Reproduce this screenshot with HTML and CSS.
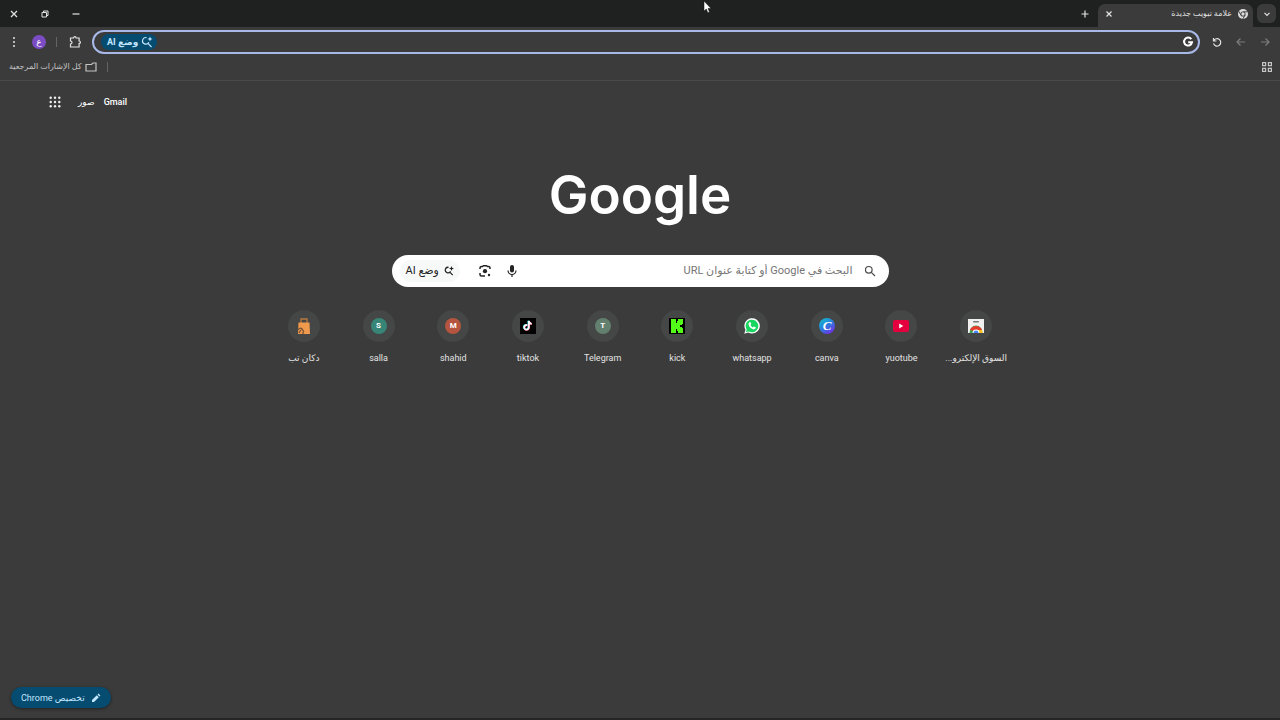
FILE: index.html
```html
<!DOCTYPE html>
<html lang="ar" dir="rtl">
<head>
    <meta charset="UTF-8">
    <meta name="viewport" content="width=device-width, initial-scale=1.0">
    <title>علامة تبويب جديدة</title>
    <link rel="stylesheet" href="styles.css">
</head>
<body>
<div class="tab-strip">
    <button class="tab-search" aria-label="بحث في علامات التبويب">
        <svg width="10" height="10" viewBox="0 0 10 10"><path class="line" d="M2.5 3.8 5 6.3 7.5 3.8"/></svg>
    </button>
    <div class="tab">
        <svg width="10" height="10" viewBox="0 0 20 20">
            <circle cx="10" cy="10" r="10" fill="#dcdcdc"/>
            <path d="M10 5.5h9M6 12.3 1.6 4.6M14 12.3 9.6 20" stroke="#3b3b3b" stroke-width="1.8"/>
            <circle cx="10" cy="10" r="5.2" fill="#3b3b3b"/>
            <circle cx="10" cy="10" r="3.4" fill="#dcdcdc"/>
        </svg>
        <span class="tab-title">علامة تبويب جديدة</span>
        <button class="icon-button tab-close" aria-label="إغلاق علامة التبويب">
            <svg width="8" height="8" viewBox="0 0 8 8"><path class="line" d="M1.5 1.5l5 5M6.5 1.5l-5 5"/></svg>
        </button>
    </div>
    <button class="icon-button new-tab" aria-label="علامة تبويب جديدة">
        <svg width="10" height="10" viewBox="0 0 10 10"><path class="line" d="M5 1.5v7M1.5 5h7"/></svg>
    </button>
    <div class="window-controls">
        <button class="icon-button" aria-label="تصغير">
            <svg width="10" height="10" viewBox="0 0 10 10"><path class="line" d="M1.5 5h7"/></svg>
        </button>
        <button class="icon-button" aria-label="استعادة">
            <svg width="10" height="10" viewBox="0 0 10 10"><path class="thin" d="M2 3.5h4.5V8H2zM3.5 3.3V2H8v4.5H6.8"/></svg>
        </button>
        <button class="icon-button" aria-label="إغلاق">
            <svg width="10" height="10" viewBox="0 0 10 10"><path class="line" d="M2 2l6 6M8 2 2 8"/></svg>
        </button>
    </div>
</div>

<div class="toolbar">
    <div class="nav-buttons">
        <button class="icon-button dim" aria-label="رجوع">
            <svg width="12" height="12" viewBox="0 0 12 12"><path class="line" d="M2 6h8M6.5 2.5 10 6l-3.5 3.5"/></svg>
        </button>
        <button class="icon-button dim" aria-label="تقدم">
            <svg width="12" height="12" viewBox="0 0 12 12"><path class="line" d="M10 6H2M5.5 2.5 2 6l3.5 3.5"/></svg>
        </button>
        <button class="icon-button" aria-label="إعادة تحميل">
            <svg width="12" height="12" viewBox="0 0 12 12"><path class="line" d="M2.5 2v3h3M2.7 4.8A3.7 3.7 0 1 1 2.5 7.4"/></svg>
        </button>
    </div>
    <div class="omnibox">
        <svg width="12" height="12" viewBox="0 0 12 12"><path d="M9.3 3.2A4 4 0 1 0 10 6.3H6.2" fill="none" stroke="#fff" stroke-width="2"/></svg>
        <input class="omnibox-input" type="text" aria-label="شريط العناوين">
        <button class="ai-chip">
            <svg width="12" height="12" viewBox="0 0 12 12"><path class="line" d="M5.5 1.6A3.3 3.3 0 1 0 7.8 6.3M7 7.3 10.5 11"/><path fill="currentColor" d="M9 .5l.7 1.8 1.8.7-1.8.7L9 5.5l-.7-1.8L6.5 3l1.8-.7z"/></svg>
            <span>وضع AI</span>
        </button>
    </div>
    <div class="toolbar-actions">
        <button class="icon-button" aria-label="الإضافات">
            <svg width="14" height="14" viewBox="0 0 14 14"><path class="line" d="M2.5 3h3a1.3 1.3 0 0 1 2.6 0h3v3a1.3 1.3 0 0 1 0 2.6V12H2.5V9a1.5 1.5 0 0 0 0-3z"/></svg>
        </button>
        <span class="divider"></span>
        <button class="avatar">ع</button>
        <button class="icon-button" aria-label="القائمة">
            <svg width="12" height="12" viewBox="0 0 12 12" fill="currentColor"><circle cx="6" cy="2" r="1"/><circle cx="6" cy="6" r="1"/><circle cx="6" cy="10" r="1"/></svg>
        </button>
    </div>
</div>

<div class="bookmarks">
    <button class="icon-button" aria-label="مجموعات علامات التبويب">
        <svg width="10" height="10" viewBox="0 0 10 10"><path class="line" d="M.6.6h3v3h-3zM6.4.6h3v3h-3zM.6 6.4h3v3h-3zM6.4 6.4h3v3h-3z"/></svg>
    </button>
    <span class="divider bookmarks-divider"></span>
    <button class="all-bookmarks">
        <svg width="12" height="10" viewBox="0 0 12 10"><path class="line" d="M1 2.5h5.5L8 1h3v8H1z"/></svg>
        <span>كل الإشارات المرجعية</span>
    </button>
</div>

<main class="page">
    <nav class="page-links">
        <a href="#">Gmail</a>
        <a href="#" class="images-link">صور</a>
        <button class="icon-button" aria-label="تطبيقات Google">
            <svg width="12" height="12" viewBox="0 0 12 12" fill="#f1f1f1"><circle cx="1.7" cy="1.7" r="1.2"/><circle cx="6" cy="1.7" r="1.2"/><circle cx="10.3" cy="1.7" r="1.2"/><circle cx="1.7" cy="6" r="1.2"/><circle cx="6" cy="6" r="1.2"/><circle cx="10.3" cy="6" r="1.2"/><circle cx="1.7" cy="10.3" r="1.2"/><circle cx="6" cy="10.3" r="1.2"/><circle cx="10.3" cy="10.3" r="1.2"/></svg>
        </button>
    </nav>

    <h1 class="logo">Google</h1>

    <form class="search">
        <svg class="search-icon" width="12" height="12" viewBox="0 0 12 12"><circle class="line" cx="4.8" cy="4.8" r="3.3"/><path class="line" d="M7.3 7.3 11 11"/></svg>
        <input class="search-input" type="text" placeholder="البحث في Google أو كتابة عنوان URL" aria-label="بحث">
        <button type="button" class="icon-button" aria-label="البحث الصوتي">
            <svg width="12" height="14" viewBox="0 0 12 14"><rect x="4" y="1" width="4" height="7.5" rx="2" fill="currentColor"/><path class="line" d="M2 6.5a4 4 0 0 0 8 0M6 10.5V13"/></svg>
        </button>
        <button type="button" class="icon-button" aria-label="البحث بالصور">
            <svg width="12" height="12" viewBox="0 0 12 12"><path class="line thick" d="M1 4V3q0-1.500 1.500-1.500h1L4.500.7h3l1 .8h1Q11 1.500 11 3v1M1 8v1.500Q1 11 2.500 11H6"/><circle cx="6" cy="6.200" r="2.100" fill="currentColor"/><circle cx="10" cy="10" r="1.200" fill="currentColor"/></svg>
        </button>
        <button type="button" class="search-ai">
            <svg width="10" height="10" viewBox="0 0 12 12"><path class="line thick" d="M5.5 1.6A3.3 3.3 0 1 0 7.8 6.3M7 7.3 10.5 11"/><path fill="currentColor" d="M9 0l.8 2.2L12 3l-2.2.8L9 6l-.8-2.2L6 3l2.2-.8z"/></svg>
            <span>وضع AI</span>
        </button>
    </form>

    <div class="shortcuts">
        <a class="shortcut" href="#">
            <span class="tile"><svg width="16" height="16" viewBox="0 0 16 16"><path d="M0 1h16v14H0z" fill="#f1f1f1"/><rect x="5" y="3" width="6" height="1.5" rx=".7" fill="#777"/><path d="M1.5 15a6.5 7.5 0 0 1 13 0z" fill="#36a852"/><path d="M2 12a6.5 6.5 0 0 1 12 0L8 14z" fill="#e33b2e"/><path d="M9 12h5q.5 1 .5 3H9z" fill="#fbc116"/><path d="M4.6 15a3.4 3.4 0 0 1 6.8 0z" fill="#fff"/><path d="M5.5 15a2.5 2.5 0 0 1 5 0z" fill="#4285f4"/></svg></span>
            <span class="label">السوق الإلكترو...</span>
        </a>
        <a class="shortcut" href="#">
            <span class="tile"><svg width="16" height="16" viewBox="0 0 16 16"><rect y="2" width="16" height="12" rx="2" fill="#e4003f"/><path d="M6.2 5.6v4.8L10.3 8z" fill="#fff"/></svg></span>
            <span class="label">yuotube</span>
        </a>
        <a class="shortcut" href="#">
            <span class="tile"><svg width="16" height="16" viewBox="0 0 16 16"><defs><linearGradient id="canva" x1="0" y1="0" x2=".7" y2="1"><stop offset="0" stop-color="#14c5cc"/><stop offset=".5" stop-color="#2484da"/><stop offset="1" stop-color="#7130e8"/></linearGradient></defs><circle cx="8" cy="8" r="8" fill="url(#canva)"/><text class="canva-letter" x="8" y="12" text-anchor="middle">C</text></svg></span>
            <span class="label">canva</span>
        </a>
        <a class="shortcut" href="#">
            <span class="tile"><svg width="16" height="16" viewBox="0 0 16 16"><path d="M.3 15.7l1.1-4A7.7 7.7 0 1 1 4.3 14.6z" fill="#fff"/><path d="M1.9 14.1l.8-2.7a6.3 6.3 0 1 1 2.1 2z" fill="#18d660"/><path d="M5.3 4.3l1.1-.2.9 2-.8 1q.8 1.6 2.4 2.3l.9-1 2 .9q.1 2.1-2.2 2.1Q6.8 11 5.1 8.2 3.7 5.6 5.3 4.3z" fill="#fff"/></svg></span>
            <span class="label">whatsapp</span>
        </a>
        <a class="shortcut" href="#">
            <span class="tile"><svg width="16" height="16" viewBox="0 0 16 16" shape-rendering="crispEdges"><path d="M0 0h16v16H0z" fill="#000"/><g fill="#53fc18"><rect x="2" y="1" width="5" height="14"/><rect x="7" y="5" width="4" height="6"/><rect x="8" y="3" width="5" height="4"/><rect x="8" y="9" width="5" height="4"/><rect x="9" y="1" width="5" height="5"/><rect x="9" y="10" width="5" height="5"/></g></svg></span>
            <span class="label">kick</span>
        </a>
        <a class="shortcut" href="#">
            <span class="tile"><span class="letter telegram">T</span></span>
            <span class="label">Telegram</span>
        </a>
        <a class="shortcut" href="#">
            <span class="tile"><svg width="16" height="16" viewBox="0 0 16 16"><path d="M0 0h16v16H0z" fill="#000"/><g fill="none" stroke-width="1.7"><path d="M7.3 7.2a2.3 2.3 0 1 0 1.5 2.3V3q.4 2.4 2.8 2.8" stroke="#25e5e0" transform="translate(-.5 -.3)"/><path d="M7.3 7.2a2.3 2.3 0 1 0 1.5 2.3V3q.4 2.4 2.8 2.8" stroke="#f43b62" transform="translate(.4 .3)"/><path d="M7.3 7.2a2.3 2.3 0 1 0 1.5 2.3V3q.4 2.4 2.8 2.8" stroke="#fff"/></g></svg></span>
            <span class="label">tiktok</span>
        </a>
        <a class="shortcut" href="#">
            <span class="tile"><span class="letter shahid">M</span></span>
            <span class="label">shahid</span>
        </a>
        <a class="shortcut" href="#">
            <span class="tile"><span class="letter salla">S</span></span>
            <span class="label">salla</span>
        </a>
        <a class="shortcut" href="#">
            <span class="tile"><svg width="16" height="16" viewBox="0 0 16 16"><path d="M5 6V1h6v5" fill="none" stroke="#b87841" stroke-width="1.3"/><path d="M2.5 4.500h11L14 16H2z" fill="#ef9a4d"/><path d="M2 12q2-3 4-1l2 3M3 15l2-3M7 16v-2" fill="none" stroke="#6d4b30" stroke-width="1.2"/></svg></span>
            <span class="label">دكان تب</span>
        </a>
    </div>

    <button class="customize">
        <svg width="10" height="10" viewBox="0 0 10 10"><path d="M1 9V7l4.8-4.8 2 2L3 9zM6.5 1.5 7.5.6l1.9 1.9-1 1z" fill="currentColor"/></svg>
        <span>تخصيص Chrome</span>
    </button>
</main>

<svg class="pointer" width="9" height="14" viewBox="0 0 9 14"><path d="M1 1v10l2.3-2 1.5 3.7 1.7-.7L5 8.5h3z" fill="#fff" stroke="#111" stroke-width=".5"/></svg>
</body>
</html>
```
FILE: styles.css
```css
* {
    box-sizing: border-box;
}

body {
    margin: 0;
    min-height: 100vh;
    display: flex;
    flex-direction: column;
    background-color: #3b3b3b;
    color: #e3e3e3;
    font-family: Roboto, "Noto Sans", "DejaVu Sans", sans-serif;
    font-size: 9px;
    line-height: 12px;
}

button,
input {
    font: inherit;
    color: inherit;
    border: none;
    background: none;
    padding: 0;
    margin: 0;
    outline: none;
}

svg {
    display: block;
    flex-shrink: 0;
}

a {
    color: inherit;
    text-decoration: none;
}

.line,
.thin {
    fill: none;
    stroke: currentColor;
    stroke-width: 1.2;
}

.thin {
    stroke-width: 1;
}

.thick {
    stroke-width: 1.5;
}

.icon-button {
    display: flex;
    align-items: center;
    justify-content: center;
    width: 16px;
    height: 16px;
}

.dim {
    color: #7d7d7d;
}

.divider {
    width: 1px;
    height: 10px;
    background-color: #646464;
}

/* Tab strip */
.tab-strip {
    display: flex;
    align-items: center;
    height: 27px;
    padding: 0 4px 0 6px;
    background-color: #1f2121;
}

.tab-search {
    display: flex;
    align-items: center;
    justify-content: center;
    width: 19px;
    height: 19px;
    border-radius: 6px;
    background-color: #3b3b3b;
}

.tab {
    display: flex;
    align-items: center;
    align-self: flex-end;
    gap: 6px;
    width: 155px;
    height: 23px;
    margin-right: 4px;
    padding: 0 5px 4px 3px;
    border-radius: 7px 7px 0 0;
    background-color: #3b3b3b;
}

.tab-title {
    flex: 1;
    font-size: 8px;
}

.new-tab {
    margin-right: 5px;
}

.window-controls {
    display: flex;
    gap: 15px;
    margin-right: auto;
}

/* Toolbar */
.toolbar {
    display: flex;
    align-items: center;
    gap: 9px;
    height: 30px;
    padding: 0 7px 0 6px;
}

.nav-buttons {
    display: flex;
    gap: 8px;
}

.omnibox {
    flex: 1;
    display: flex;
    align-items: center;
    height: 24px;
    padding: 0 4px 0 7px;
    border: 2px solid #a8b9e8;
    border-radius: 12px;
}

.omnibox-input {
    flex: 1;
    min-width: 0;
}

.ai-chip {
    display: flex;
    align-items: center;
    gap: 3px;
    height: 16px;
    padding: 0 4px 0 6px;
    border-radius: 8px;
    background-color: #064b70;
    color: #c2e7ff;
    font-weight: bold;
}

.toolbar-actions {
    display: flex;
    align-items: center;
    gap: 10px;
}

.avatar {
    width: 14px;
    height: 14px;
    border-radius: 50%;
    background-color: #7b4cc4;
    color: #fff;
}

/* Bookmarks bar */
.bookmarks {
    display: flex;
    align-items: center;
    gap: 10px;
    height: 24px;
    padding: 0 5px 4px 9px;
    border-bottom: 1px solid #494949;
    color: #c4c4c4;
}

.bookmarks-divider {
    margin-right: auto;
}

.all-bookmarks {
    display: flex;
    align-items: center;
    gap: 3px;
    font-size: 8px;
}

/* New tab page */
.page {
    flex: 1;
    display: flex;
    flex-direction: column;
    align-items: center;
    border-bottom: 2px solid #252525;
}

.page-links {
    align-self: flex-end;
    display: flex;
    align-items: center;
    gap: 9px;
    margin-left: 47px;
    padding-top: 13px;
    color: #fff;
    font-weight: 500;
}

.images-link {
    margin-left: 6px;
}

.logo {
    margin: 48px 0 22px;
    color: #fff;
    font-family: Inter, sans-serif;
    font-size: 53px;
    font-weight: 600;
    line-height: 75px;
}

.search {
    display: flex;
    align-items: center;
    gap: 11px;
    width: 497px;
    max-width: 100%;
    height: 32px;
    padding: 0 13px 0 8px;
    border-radius: 16px;
    background-color: #fff;
    color: #242424;
}

.search-icon {
    color: #4a4a4a;
}

.search-input {
    flex: 1;
    min-width: 0;
    height: 24px;
    font-size: 11px;
    line-height: 24px;
}

.search-input::placeholder {
    color: #757575;
    opacity: 1;
}

.search-ai {
    display: flex;
    align-items: center;
    gap: 5px;
    height: 22px;
    margin-right: 6px;
    padding: 0 6px;
    border-radius: 11px;
    background-color: #f7f8f8;
    font-size: 11px;
}

.shortcuts {
    display: grid;
    grid-template-columns: repeat(10, 1fr);
    width: 747px;
    max-width: 100%;
    margin-top: 23px;
}

.shortcut {
    display: flex;
    flex-direction: column;
    align-items: center;
    gap: 10px;
    white-space: nowrap;
}

.tile {
    display: flex;
    align-items: center;
    justify-content: center;
    width: 32px;
    height: 32px;
    border-radius: 50%;
    background-color: #454746;
}

.letter {
    width: 16px;
    height: 16px;
    border-radius: 50%;
    color: #fff;
    font-size: 8px;
    font-weight: bold;
    line-height: 16px;
    text-align: center;
}

.telegram {
    background-color: #62806d;
}

.shahid {
    background-color: #b5553f;
}

.salla {
    background-color: #368577;
}

.canva-letter {
    fill: #fff;
    font-family: "Liberation Serif", serif;
    font-size: 13px;
    font-style: italic;
    font-weight: bold;
}

.customize {
    display: flex;
    align-items: center;
    align-self: flex-end;
    gap: 6px;
    height: 21px;
    margin: auto 0 10px 11px;
    padding: 0 10px;
    border-radius: 11px;
    background-color: #064b70;
    color: #c2e7ff;
    box-shadow: 0 1px 3px #222;
}

/* Mouse pointer over the tab strip */
.pointer {
    position: absolute;
    top: 0;
    left: 703px;
}
```
